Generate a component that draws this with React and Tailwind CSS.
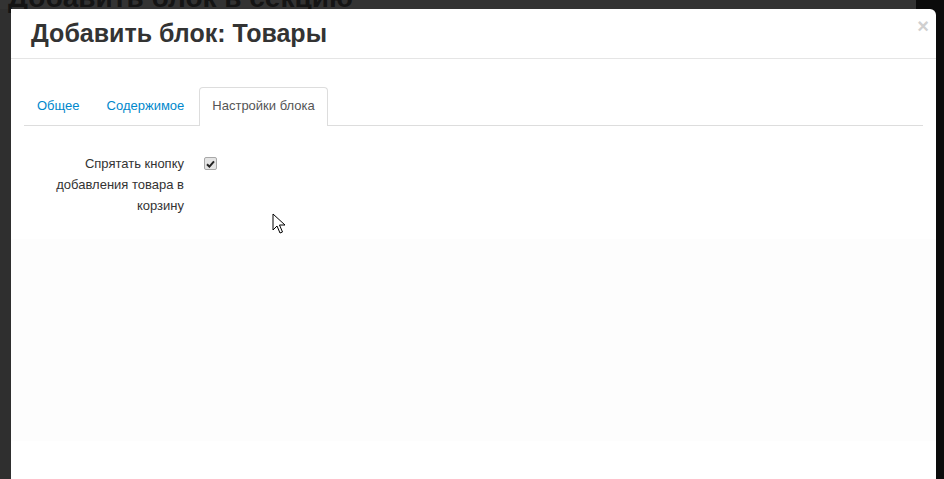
import React from "react";

function CheckMark() {
  return (
    <span className="mt-[4px] flex h-[13px] w-[13px] items-center justify-center rounded-[2px] border border-[#a8a8a8] bg-[#e4e4e4]">
      <svg width="9" height="8" viewBox="0 0 9 8">
        <path d="M1 4.2 L3.4 6.6 L8 1.4" fill="none" stroke="#222" strokeWidth="2" />
      </svg>
    </span>
  );
}

function Cursor() {
  return (
    <svg
      className="absolute left-[261px] top-[204px]"
      width="14"
      height="22"
      viewBox="0 0 14 22"
    >
      <path
        d="M1 1 L1 17 L5 13 L8 20 L10.5 19 L7.5 12 L13 12 Z"
        fill="#fff"
        stroke="#000"
        strokeWidth="1"
        strokeLinejoin="round"
      />
    </svg>
  );
}

export default function App() {
  return (
    <div
      className="relative h-[479px] w-[944px] overflow-hidden bg-[#2f2f2f]"
      style={{ fontFamily: '"Liberation Sans", Arial, sans-serif' }}
    >
      {/* page behind the overlay */}
      <div className="absolute left-0 top-0 h-[9px] w-[916px] bg-[#333]" />
      <div className="absolute left-[916px] top-0 h-full w-[28px] bg-[#0b0b0b]" />
      <div className="absolute left-[8px] top-[-18px] whitespace-nowrap text-[28px] font-bold leading-[32px] text-[#141414]">
        Добавить блок в секцию
      </div>

      <div className="relative ml-[11px] mt-[9px] flex h-[470px] w-[925px] flex-col rounded-tr-[6px] bg-white">
        <div className="border-b border-[#e5e5e5] px-5 pb-[10px] pt-[9px]">
          <div className="flex items-center justify-between">
            <h3 className="text-[25px] font-bold leading-[30px] text-[#333]">
              Добавить блок: Товары
            </h3>
            <span className="-mr-[13px] -mt-[14px] text-[20px] font-bold leading-[20px] text-[#d0d0d0]">
              ×
            </span>
          </div>
        </div>

        <div className="h-[180px] px-[13px] pt-[28px] text-[13px]">
          <div className="flex border-b border-[#ddd]">
            <span className="mr-[3px] pl-[13px] pr-[12px] py-[9px] leading-[20px] text-[#0088cc]">
              Общее
            </span>
            <span className="mr-[3px] px-[12px] py-[9px] leading-[20px] text-[#0088cc]">
              Содержимое
            </span>
            <span className="-mb-px rounded-t-[4px] border border-b-0 border-[#ddd] bg-white px-[12px] py-[8px] leading-[20px] text-[#555]">
              Настройки блока
            </span>
          </div>

          <div className="mt-[27px] flex">
            <div className="w-[160px] text-right leading-[21px] text-[#333]">
              Спрятать кнопку
              <br />
              добавления товара в
              <br />
              корзину
            </div>
            <div className="ml-[20px]">
              <CheckMark />
            </div>
          </div>
        </div>

        <div className="h-[202px] bg-[#fdfdfd]" />
        <div className="flex-1 bg-white" />

        <Cursor />
      </div>
    </div>
  );
}
